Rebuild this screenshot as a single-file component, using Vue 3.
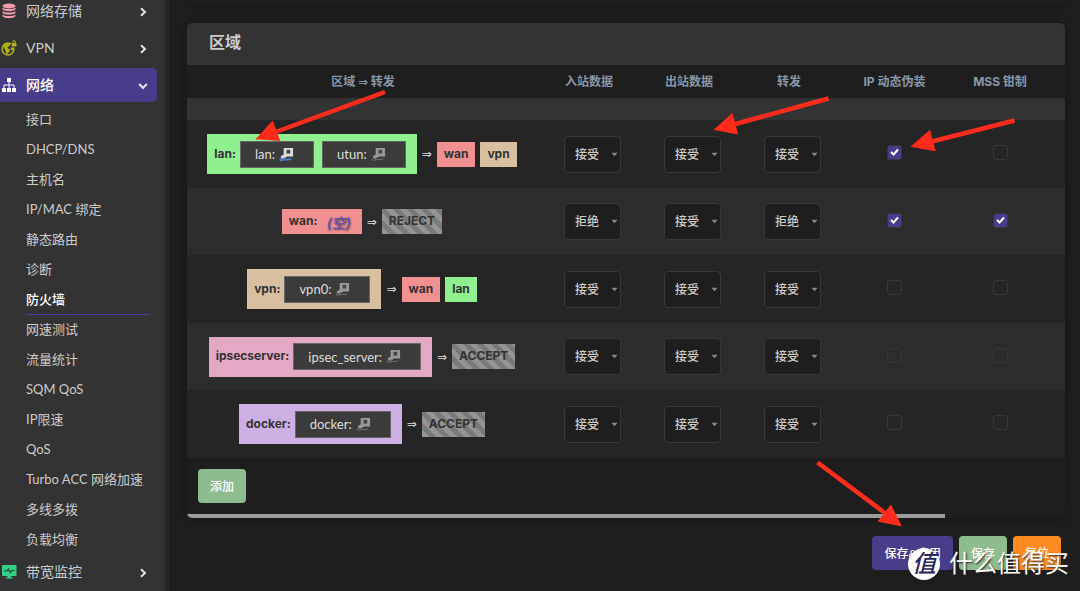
<script setup>
import { ref } from 'vue'

const submenu = [
  '接口', 'DHCP/DNS', '主机名', 'IP/MAC 绑定', '静态路由', '诊断', '防火墙', '网速测试',
  '流量统计', 'SQM QoS', 'IP限速', 'QoS', 'Turbo ACC 网络加速', '多线多拨', '负载均衡',
]
const active = '防火墙'
const headers = ['入站数据', '出站数据', '转发', 'IP 动态伪装', 'MSS 钳制']
const policyNames = ['入站数据', '出站数据', '转发']
const flagNames = ['IP 动态伪装', 'MSS 钳制']

const zones = ref([
  { name: 'lan', ifaces: [{ name: 'lan', up: true }, { name: 'utun' }], targets: ['wan', 'vpn'], policy: ['接受', '接受', '接受'], flags: [true, false] },
  { name: 'wan', ifaces: [], fallback: 'REJECT', policy: ['拒绝', '接受', '拒绝'], flags: [true, true] },
  { name: 'vpn', ifaces: [{ name: 'vpn0' }], targets: ['wan', 'lan'], policy: ['接受', '接受', '接受'], flags: [false, false] },
  { name: 'ipsecserver', ifaces: [{ name: 'ipsec_server' }], fallback: 'ACCEPT', policy: ['接受', '接受', '接受'], flags: [false, false] },
  { name: 'docker', ifaces: [{ name: 'docker' }], fallback: 'ACCEPT', policy: ['接受', '接受', '接受'], flags: [false, false] },
])
</script>

<template>
  <div class="page">
    <nav class="sidebar">
      <a class="menu" href="#">
        <svg class="icon" viewBox="0 0 16 16" fill="#f29cab">
          <ellipse cx="8" cy="3" rx="6.5" ry="2.4" />
          <path d="M1.5 4.6c2 2 11 2 13 0v2c-2 2.2-11 2.2-13 0zM1.5 8c2 2 11 2 13 0v2c-2 2.2-11 2.2-13 0zM1.5 11.4c2 2 11 2 13 0v1.8c-2 2.6-11 2.6-13 0z" />
        </svg>
        <span>网络存储</span>
        <svg class="chev" viewBox="0 0 10 10"><path d="M3 1.2 7 5 3 8.8" /></svg>
      </a>
      <a class="menu" href="#">
        <svg class="icon" viewBox="0 0 16 16">
          <circle cx="7" cy="9" r="5.9" fill="none" stroke="#b1b11f" stroke-width="1.5" />
          <path d="M2 6.5 5.5 3.5l3.500.5-.5 2-2 1.2.5 1.3 2 .8-.5 2.2-2 2.5-1.5-.5-.5-3zM9.5 7.5l3-.5-.5 3-1.7.5z" fill="#b1b11f" />
          <rect x="10" y="0" width="6" height="7.5" fill="#333" />
          <rect x="10.7" y="3" width="4.8" height="3.6" rx=".6" fill="#b1b11f" />
          <path d="M11.8 3V1.9a1.3 1.3 0 0 1 2.6 0V3" fill="none" stroke="#b1b11f" />
        </svg>
        <span>VPN</span>
        <svg class="chev" viewBox="0 0 10 10"><path d="M3 1.2 7 5 3 8.8" /></svg>
      </a>
      <a class="menu open" href="#">
        <svg class="icon" viewBox="0 0 16 16" fill="#fff">
          <path d="M6 1h4v4H6zM1 11h4v4H1zM6 11h4v4H6zM11 11h4v4h-4z" />
          <path d="M8 5v6M3 11V8h10v3" fill="none" stroke="#fff" />
        </svg>
        <span>网络</span>
        <svg class="chev" viewBox="0 0 10 10"><path d="M1.2 3 5 7l3.8-4" /></svg>
      </a>
      <ul class="submenu">
        <li v-for="item in submenu" :key="item">
          <a href="#" :class="{ active: item === active }">{{ item }}</a>
        </li>
      </ul>
      <a class="menu" href="#">
        <svg class="icon" viewBox="0 0 16 16">
          <rect x="1" y="1" width="14.5" height="11" rx="1" fill="#35cf86" />
          <path d="M6.5 12h3.5v1.5h2v1H4.5v-1h2z" fill="#35cf86" />
          <path d="M3 7h3l1.3-2 2 3.5L10.5 6.5h3" fill="none" stroke="#23483a" stroke-width="1.2" />
        </svg>
        <span>带宽监控</span>
        <svg class="chev" viewBox="0 0 10 10"><path d="M3 1.2 7 5 3 8.8" /></svg>
      </a>
    </nav>

    <main class="content">
      <div class="previous"></div>
      <section class="card">
        <h3>区域</h3>
        <table>
          <colgroup>
            <col><col class="c-pol"><col class="c-pol"><col class="c-pol"><col class="c-masq"><col class="c-pol"><col class="c-rest">
          </colgroup>
          <thead>
            <tr class="titles">
              <th>区域 <span class="implies">⇒</span> 转发</th>
              <th v-for="h in headers" :key="h">{{ h }}</th>
              <th></th>
            </tr>
            <tr class="descr"><th colspan="7"></th></tr>
          </thead>
          <tbody>
            <tr v-for="z in zones" :key="z.name">
              <td>
                <div class="forward">
                  <span class="zone" :class="['z-' + z.name, { filled: z.ifaces.length }]">
                    <strong>{{ z.name }}:</strong>
                    <span v-for="i in z.ifaces" :key="i.name" class="iface">
                      {{ i.name }}:
                      <svg viewBox="0 0 16 16" class="plug" :class="{ up: i.up }">
                        <path class="body" d="M5 1h10v9H8.5L7 11.5 4 10.5 5 7z" />
                        <rect class="ring" x="8" y="3" width="4" height="4" />
                        <path class="body" d="M2 9.5 4.5 8.5 6.5 10.5 5 12.5 2.5 12z" />
                        <path class="wire" d="M2.5 11.5C0 14.5 2 14.5 5 13.5S10 14.5 13 12.5" />
                      </svg>
                    </span>
                    <em v-if="!z.ifaces.length">(空)</em>
                  </span>
                  <span class="to implies">⇒</span>
                  <span v-if="z.fallback" class="zone striped"><strong>{{ z.fallback }}</strong></span>
                  <span v-for="t in z.targets" :key="t" class="zone target" :class="'z-' + t"><strong>{{ t }}</strong></span>
                </div>
              </td>
              <td v-for="(p, k) in policyNames" :key="p">
                <label class="pick">
                  <select v-model="z.policy[k]" :aria-label="z.name + ' ' + p">
                    <option>接受</option>
                    <option>拒绝</option>
                    <option>丢弃</option>
                  </select>
                  <svg viewBox="0 0 8 5"><path d="M.5.5h7L4 4.5z" /></svg>
                </label>
              </td>
              <td v-for="(f, k) in flagNames" :key="f">
                <label class="check">
                  <input v-model="z.flags[k]" type="checkbox" :aria-label="z.name + ' ' + f">
                  <svg v-if="z.flags[k]" viewBox="0 0 10 10"><path d="M1.5 5 4 7.5 8.5 2.5" /></svg>
                </label>
              </td>
              <td></td>
            </tr>
          </tbody>
        </table>
        <div class="add"><button type="button" class="btn green">添加</button></div>
        <div class="scroll"><div class="thumb"></div></div>
      </section>
      <div class="actions">
        <button type="button" class="btn indigo">保存&amp;应用</button>
        <button type="button" class="btn green">保存</button>
        <button type="button" class="btn orange">复位</button>
      </div>
    </main>

    <svg class="arrows" viewBox="0 0 1080 591">
      <path class="shaft" d="M385 92 270 134M828.5 98.5 730 125.5M1014.5 120.5 928 142.5M817.5 462.5 889 516" />
      <path class="head" d="M255.500 139.300 272.700 120.500 280.300 141zM713.500 129.700 732.500 113 738.300 134.500zM910.500 146.700 930 129.700 935.700 151.300zM902 526.600 891 504.500 877.500 521.500z" />
    </svg>
    <div class="mark"><span class="seal">值</span><span>什么值得买</span></div>
  </div>
</template>

<style>
body { background: #1e1e1e; }
</style>

<style scoped>
* { box-sizing: border-box; }
.page {
  position: relative;
  display: flex;
  height: 100vh;
  overflow: hidden;
  background: #1e1e1e;
  color: #ccc;
  font-family: Inter, "Noto Sans CJK SC", sans-serif;
  font-size: 12px;
}
a { color: inherit; text-decoration: none; }
.sidebar {
  flex: 0 0 165px;
  margin-top: -6px;
  background: #333;
  box-shadow: 4px 0 0 #262626;
  font-family: Lato, "Noto Sans CJK SC", sans-serif;
}
.menu {
  display: flex;
  align-items: center;
  width: 157px;
  height: 34px;
  margin-bottom: 3px;
  padding: 0 9px 0 1px;
  font-size: 14px;
}
.menu span { flex: 1; margin-left: 9px; padding-bottom: 2px; }
.menu.open {
  margin-bottom: 2px;
  border-radius: 0 5px 5px 0;
  background: #483d8b;
  color: #fff;
  font-weight: 500;
}
.icon { width: 16px; height: 16px; }
.chev { width: 10px; height: 10px; margin-top: 2px; fill: none; stroke: #e4e4e4; stroke-width: 2; }
.submenu { margin: 0; padding: 1px 15px 0 26px; list-style: none; }
.submenu a {
  display: block;
  height: 30px;
  border-bottom: 1px solid transparent;
  font-size: 13px;
  line-height: 29px;
  white-space: nowrap;
}
.submenu a.active { border-bottom-color: #4b3aa8; color: #fff; font-weight: 500; }

.content { flex: 1; min-width: 0; padding: 0 15px 0 22px; }
.previous {
  height: 5px;
  margin-bottom: 18px;
  border-radius: 0 0 5px 5px;
  box-shadow: 0 0 5px #181818;
}
.card {
  overflow: hidden;
  border-radius: 5px;
  background: #1e1e1e;
  box-shadow: 0 0 6px #151515;
}
h3 {
  height: 42px;
  margin: 0;
  padding-left: 22px;
  background: #333;
  font-size: 16px;
  font-weight: 700;
  line-height: 38px;
}
table { width: 100%; table-layout: fixed; border-collapse: collapse; }
.c-pol { width: 100px; }
.c-masq { width: 111px; }
.c-rest { width: 15px; }
th, td { padding: 0; }
.titles th { height: 33px; padding-bottom: 2px; color: #8898aa; font-size: 12px; font-weight: 700; }
.implies { font-family: "DejaVu Sans", sans-serif; }
.descr th { height: 22px; background: #333; }
tbody tr { height: 68px; background: #252525; }
tbody tr:nth-child(even) { height: 67px; background: #2c2c2c; }
.forward { display: flex; align-items: center; justify-content: center; padding-right: 2px; }
.zone {
  display: flex;
  align-items: center;
  height: 25px;
  padding: 0 7px;
  color: #333;
  white-space: nowrap;
}
.zone strong { padding-bottom: 2px; }
.zone.filled { height: 40px; padding-right: 11px; }
.z-lan { background: #90f090; }
.z-wan { background: #f09090; }
.z-vpn { background: #d7bf9f; }
.z-ipsecserver { background: #e3a8c3; }
.z-docker { background: #cdb0e3; }
.striped {
  background: repeating-linear-gradient(45deg, #949494 0 5px, #7a7a7a 5px 10px);
}
.iface {
  display: flex;
  align-items: center;
  gap: 4px;
  height: 27px;
  margin-left: 8px;
  padding: 0 19px 0 14px;
  border: 1px solid #666;
  background: #3b3b3b;
  color: #ddd;
  font-family: Lato, sans-serif;
  font-size: 13px;
}
strong + .iface { margin-left: 4px; }
.plug { width: 15px; height: 15px; }
.body { fill: #999; }
.ring { fill: #444; }
.wire { fill: none; stroke: #777; stroke-width: 1; }
.up .body { fill: #ddd; }
.up .wire { stroke: #4d7fc4; stroke-width: 2; }
em { margin: 0 4px 0 9px; color: #5b4cc0; font-size: 14px; text-shadow: 1px 1px 2px #333; }
.to { margin: 0 5px; color: #ddd; }
.target + .target { margin-left: 5px; }
.pick { position: relative; display: block; width: 57px; margin-left: 25px; }
select {
  display: block;
  appearance: none;
  width: 100%;
  height: 37px;
  padding: 0 10px;
  border: 1px solid #383838;
  border-radius: 4px;
  background: #1e1e1e;
  color: #ccc;
  font: inherit;
  font-weight: 500;
}
.pick svg { position: absolute; right: 3px; top: 16px; width: 7px; height: 5px; fill: #888; }
.check { position: relative; display: block; width: 15px; height: 15px; margin: 0 auto 3px; }
input {
  display: block;
  appearance: none;
  width: 15px;
  height: 15px;
  margin: 0;
  border: 1px solid #383838;
  border-radius: 3px;
  background: transparent;
}
input:checked { background: #483d8b; }
.check svg { position: absolute; left: 2px; top: 2px; width: 11px; height: 10px; fill: none; stroke: #fff; stroke-width: 2; }
.btn {
  height: 34px;
  padding: 0 12px 2px;
  border: 0;
  border-radius: 4px;
  color: #fff;
  font: 500 12px Lato, "Noto Sans CJK SC", sans-serif;
}
.green { background: #8fbc8f; }
.indigo { background: #483d8b; }
.orange { background: #ff8c22; }
.add { display: flex; padding: 11px 11px; }
.scroll { height: 4px; }
.thumb { width: 86.3%; height: 100%; background: #9c9c9c; }
.actions { display: flex; justify-content: flex-end; gap: 6px; padding: 18px 4px 0 0; }
.arrows { position: absolute; left: 0; top: 0; width: 1080px; height: 591px; pointer-events: none; }
.shaft { stroke: #ff2b1c; stroke-width: 4.5; }
.head { fill: #ff2b1c; }
.mark {
  position: absolute;
  right: 11px;
  bottom: 10px;
  display: flex;
  align-items: center;
  gap: 9px;
  color: #fff;
  font-size: 24px;
  line-height: 34px;
  text-shadow: 1px 1px 2px #222;
}
.seal {
  width: 32px;
  height: 32px;
  border-radius: 50%;
  background: #fff;
  color: #2b2558;
  font-size: 24px;
  font-style: italic;
  font-weight: 500;
  line-height: 31px;
  text-align: center;
  text-shadow: none;
}
</style>
